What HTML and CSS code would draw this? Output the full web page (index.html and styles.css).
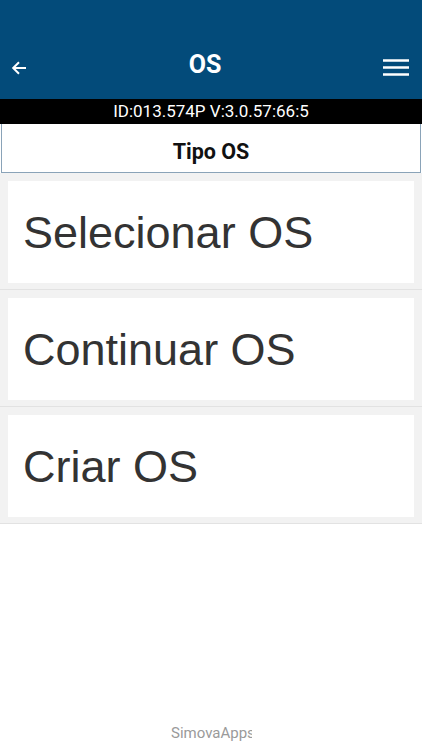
FILE: index.html
```html
<!DOCTYPE html>
<html lang="pt">
<head>
    <meta charset="UTF-8">
    <title>OS</title>
    <link rel="stylesheet" href="styles.css">
</head>
<body>
    <div class="header">
        <div class="bar">
            <span class="back">
                <svg width="16" height="16" viewBox="0 0 16 16"><path d="M15 8H2.5M8 2.2L2.2 8L8 13.8" fill="none" stroke="#fff" stroke-width="2"/></svg>
            </span>
            <span class="title">OS</span>
            <span class="menu">
                <svg width="26" height="18" viewBox="0 0 26 18"><path d="M0 1.5H26M0 8.5H26M0 15.5H26" stroke="#fff" stroke-width="2.6"/></svg>
            </span>
        </div>
    </div>
    <div class="info">ID:013.574P V:3.0.57:66:5</div>
    <div class="tipo">Tipo OS</div>
    <ul class="list">
        <li><div class="card">Selecionar OS</div></li>
        <li><div class="card">Continuar OS</div></li>
        <li><div class="card">Criar OS</div></li>
    </ul>
    <div class="footer"><span>SimovaApps</span></div>
</body>
</html>
```

FILE: styles.css
```css
*{
    margin:0;
    padding:0;
    box-sizing:border-box;
}
body{
    width:422px;
    height:750px;
    background:#fff;
    font-family: Roboto, "Liberation Sans", sans-serif;
    display:flex;
    flex-direction:column;
}

.header{
    height:99px;
    background:#034b7a;
    display:flex;
    align-items:flex-end;
}
.header .bar{
    width:100%;
    height:62px;
    display:flex;
    align-items:center;
    justify-content:space-between;
    padding:0 13px 0 11px;
}
.header .back,
.header .menu{
    display:flex;
}
.header .title{
    color:#fff;
    font-weight:bold;
    font-size:25px;
    padding-bottom:8px;
}

.info{
    height:25px;
    background:#000;
    color:#fff;
    font-size:17px;
    text-align:center;
    line-height:25px;
}

.tipo{
    height:49px;
    border:1px solid #8aa3b8;
    border-top:none;
    margin:0 1px;
    font-size:21.5px;
    font-weight:bold;
    color:#111;
    text-align:center;
    line-height:55px;
}

.list{
    list-style:none;
}
.list li{
    background:#f2f2f2;
    padding:8px 8px 6px 8px;
    border-bottom:1px solid #e2e2e2;
}
.list .card{
    height:102px;
    background:#fff;
    padding-left:15px;
    font-family:"Liberation Sans", Arial, sans-serif;
    font-size:45px;
    color:#333;
    line-height:104px;
}

.footer{
    margin-top:auto;
    height:26px;
    text-align:center;
    padding-left:1px;
}
.footer span{
    display:inline-block;
    width:81px;
    overflow:hidden;
    white-space:nowrap;
    color:#9a9a9a;
    font-size:15px;
}
```
